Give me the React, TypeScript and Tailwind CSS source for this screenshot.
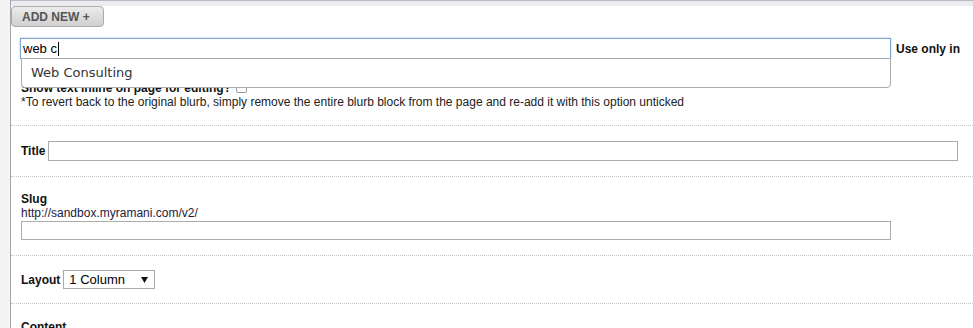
import React from 'react'

const sans = { fontFamily: '"Liberation Sans", Arial, sans-serif' }

function Section({ children, className = '', last }: { children: React.ReactNode; className?: string; last?: boolean }) {
  return (
    <div className={`px-[10px] ${className} ${last ? '' : 'border-b border-dotted border-[#c4c4c4]'}`}>
      {children}
    </div>
  )
}

export default function App() {
  return (
    <div className="flex h-[328px] w-full overflow-hidden bg-white text-[12px] text-[#111]" style={sans}>
      {/* left gutter */}
      <div className="w-[11px] shrink-0 border-r border-[#a4a4ae] bg-[#f4f4f4]" />

      <div className="min-w-0 flex-1">
        <div className="h-[6px] border-t border-[#b9b9c2] bg-[#ececf0]" />

        <button className="flex h-[21px] w-[93px] items-center rounded-[4px] border border-[#ababab] bg-gradient-to-b from-[#ececec] to-[#cfcfcf] pl-[10px] text-[12px] font-bold text-[#555]">
          ADD NEW +
        </button>

        {/* blurb block */}
        <div className="mt-[11px] border-b border-dotted border-[#c4c4c4] px-[10px] pb-[15px]">
          <div className="flex items-center">
            <div className="relative -ml-px">
              <div className="flex h-[21px] w-[871px] items-center border border-[#7ea6d6] pl-[2px] text-[13px] text-black shadow-[0_0_2px_rgba(90,140,210,0.5)]">
                web c<span className="ml-px inline-block h-[14px] w-px bg-black" />
              </div>
              {/* autocomplete menu */}
              <div
                className="absolute left-px top-[20px] z-10 flex h-[30px] w-[870px] items-center rounded-b-[4px] border border-[#ababab] bg-white pl-[9px] text-[13px] text-[#333]"
                style={{ fontFamily: '"DejaVu Sans", Verdana, sans-serif' }}
              >
                Web Consulting
              </div>
            </div>
            <span className="ml-[5px] whitespace-nowrap font-bold">Use only in</span>
          </div>

          <div className="mt-[21px] flex h-[15px] items-center font-bold">
            Show text inline on page for editing?
            <span className="ml-[5px] inline-block h-[11px] w-[11px] rounded-[2px] border border-[#999] bg-white" />
          </div>
          <div className="h-[15px] leading-[15px] text-[#222]">
            *To revert back to the original blurb, simply remove the entire blurb block from the page and re-add it with this option unticked
          </div>
        </div>

        <Section className="py-[15px]">
          <div className="flex items-center">
            <span className="mr-[3px] font-bold">Title</span>
            <div className="h-[20px] w-[910px] border border-[#ababab] bg-white" />
          </div>
        </Section>

        <Section className="pt-[15px] pb-[15px]">
          <div className="font-bold leading-[14px]">Slug</div>
          <div className="leading-[14px] text-[#1e1a3c]">http://sandbox.myramani.com/v2/</div>
          <div className="mt-[1px] h-[19px] w-[870px] border border-[#ababab] bg-white" />
        </Section>

        <Section className="pt-[14px] pb-[14px]">
          <div className="flex items-center">
            <span className="mr-[3px] font-bold">Layout</span>
            <div className="flex h-[19px] w-[92px] items-center justify-between border border-[#a9a9a9] bg-white pl-[5px] pr-[6px] text-[13px] text-black">
              1 Column
              <svg width="7" height="6" viewBox="0 0 7 6">
                <path d="M0 0h7L3.5 6z" fill="#111" />
              </svg>
            </div>
          </div>
        </Section>

        <Section className="pt-[14px]" last>
          <div className="font-bold">Content</div>
        </Section>
      </div>
    </div>
  )
}
